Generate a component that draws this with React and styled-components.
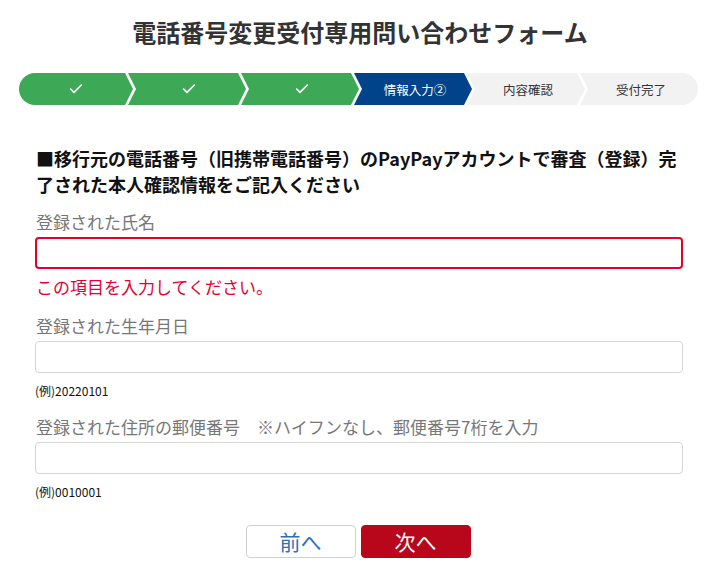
import styled, { createGlobalStyle, css } from "styled-components";
import { Check } from "lucide-react";

const GlobalStyle = createGlobalStyle`
  body {
    margin: 0;
    background: #fff;
    font-family: "Noto Sans CJK JP", "Noto Sans", sans-serif;
    color: #333;
  }
`;

const steps = [
  { label: null, state: "done" },
  { label: null, state: "done" },
  { label: null, state: "done" },
  { label: "情報入力②", state: "current" },
  { label: "内容確認", state: "todo" },
  { label: "受付完了", state: "todo" },
];

const fields = [
  { label: "登録された氏名", error: "この項目を入力してください。" },
  { label: "登録された生年月日", hint: "(例)20220101" },
  {
    label: "登録された住所の郵便番号　※ハイフンなし、郵便番号7桁を入力",
    hint: "(例)0010001",
  },
];

function App() {
  return (
    <>
      <GlobalStyle />
      <Page>
        <Title>電話番号変更受付専用問い合わせフォーム</Title>
        <Stepper>
          {steps.map((s, i) => (
            <Step
              key={i}
              $state={s.state}
              $first={i === 0}
              $last={i === steps.length - 1}
            >
              {s.label ? s.label : <Check size={16} strokeWidth={2.4} />}
            </Step>
          ))}
        </Stepper>
        <Form>
          <Heading>
            ■移行元の電話番号（旧携帯電話番号）のPayPayアカウントで審査（登録）完了された本人確認情報をご記入ください
          </Heading>
          {fields.map((f, i) => (
            <Field key={i}>
              <Label>{f.label}</Label>
              <Input $error={!!f.error} />
              {f.error && <ErrorText>{f.error}</ErrorText>}
              {f.hint && <Hint>{f.hint}</Hint>}
            </Field>
          ))}
          <Buttons>
            <Button>前へ</Button>
            <Button $primary>次へ</Button>
          </Buttons>
        </Form>
      </Page>
    </>
  );
}

export default App;

const Page = styled.div`
  width: 720px;
  padding-top: 14px;
`;

const Title = styled.h1`
  margin: 0;
  font-size: 24px;
  line-height: 36px;
  font-weight: 700;
  text-align: center;
  color: #333;
`;

const Stepper = styled.div`
  display: flex;
  margin: 23px 22px 0 19px;
  height: 32px;
`;

const stepColors = {
  done: css`
    background: #3da856;
    color: #fff;
  `,
  current: css`
    background: #00438a;
    color: #fff;
  `,
  todo: css`
    background: #f2f2f2;
    color: #333;
  `,
};

const Step = styled.div`
  flex: 1;
  display: flex;
  align-items: center;
  justify-content: center;
  font-size: 12.5px;
  ${(p) => stepColors[p.$state]}
  margin-left: ${(p) => (p.$first ? "0" : "-5px")};
  border-radius: ${(p) =>
    p.$first ? "16px 0 0 16px" : p.$last ? "0 16px 16px 0" : "0"};
  clip-path: ${(p) =>
    p.$first
      ? "polygon(0 0, calc(100% - 8px) 0, 100% 50%, calc(100% - 8px) 100%, 0 100%)"
      : p.$last
      ? "polygon(0 0, 100% 0, 100% 100%, 0 100%, 8px 50%)"
      : "polygon(0 0, calc(100% - 8px) 0, 100% 50%, calc(100% - 8px) 100%, 0 100%, 8px 50%)"};
  padding-left: ${(p) => (p.$first ? "0" : "4px")};
`;

const Form = styled.div`
  padding: 0 37px 0 35px;
  margin-top: 40px;
`;

const Heading = styled.p`
  margin: 0 0 13px 1px;
  font-size: 18px;
  line-height: 26px;
  font-weight: 700;
  color: #111;
`;

const Field = styled.div`
  display: flex;
  flex-direction: column;
  margin-bottom: 15px;
`;

const Label = styled.label`
  font-size: 17px;
  line-height: 24px;
  color: #777;
  margin-bottom: 3px;
  padding-left: 1px;
`;

const Input = styled.input`
  box-sizing: border-box;
  height: 32px;
  width: 100%;
  border-radius: 4px;
  border: ${(p) => (p.$error ? "2px solid #e60028" : "1px solid #d4d4d4")};
  outline: none;
`;

const ErrorText = styled.div`
  font-size: 17px;
  line-height: 24px;
  color: #e60033;
  margin-top: 6px;
  padding-left: 1px;
`;

const Hint = styled.div`
  font-size: 12px;
  line-height: 18px;
  color: #111;
  margin-top: 9px;
`;

const Buttons = styled.div`
  display: flex;
  justify-content: center;
  gap: 5px;
  margin-top: 24px;
  padding-right: 2px;
`;

const Button = styled.button`
  width: 110px;
  height: 33px;
  border-radius: 4px;
  font-family: "Noto Sans CJK JP", sans-serif;
  font-size: 21px;
  line-height: 1;
  cursor: pointer;
  ${(p) =>
    p.$primary
      ? css`
          background: #b8061a;
          border: 1px solid #b8061a;
          color: #fff;
        `
      : css`
          background: #fff;
          border: 1px solid #d0d0d0;
          color: #2e6fb4;
        `}
`;
